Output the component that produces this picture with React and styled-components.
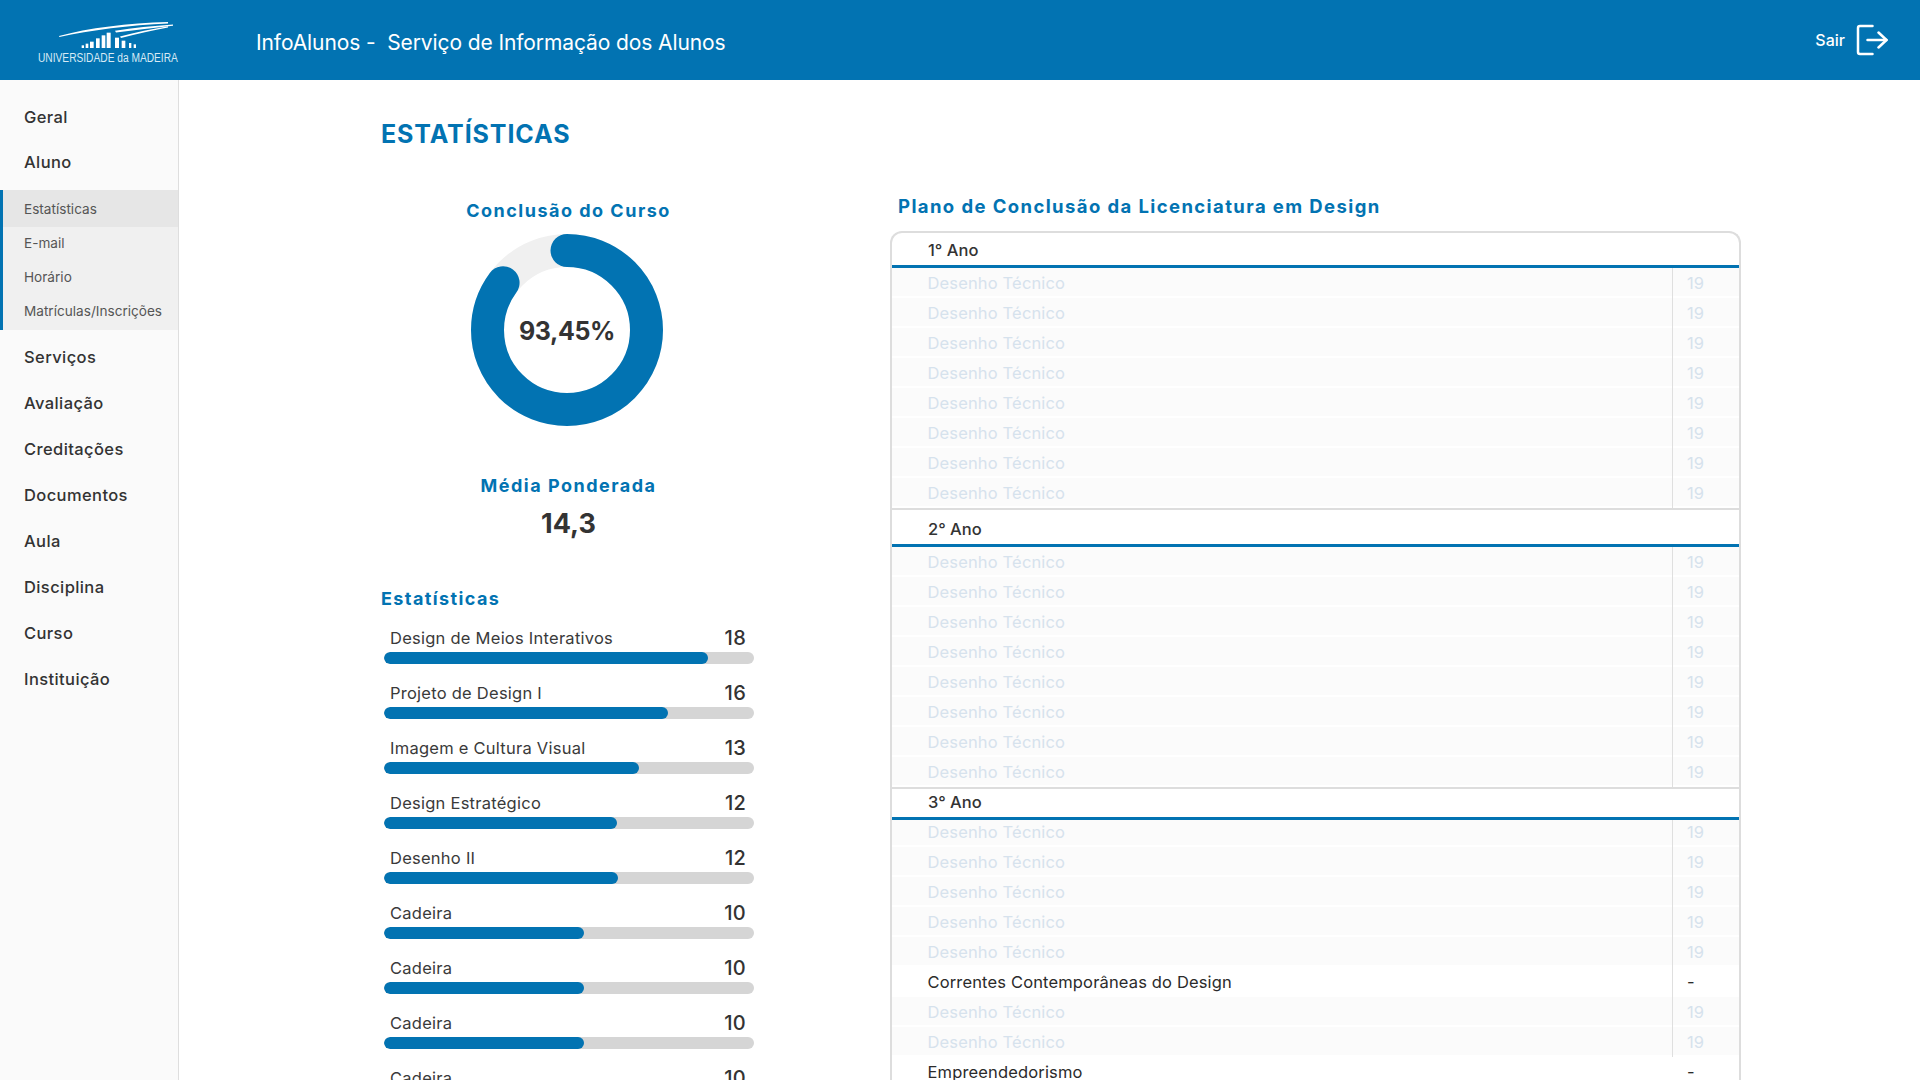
import React from 'react';
import styled, { createGlobalStyle } from 'styled-components';

const BLUE = '#0273b2';

const GlobalStyle = createGlobalStyle`
    html, body {
        margin: 0;
        height: 100%;
        overflow: hidden;
        background: #fff;
    }
    body {
        font-family: Inter, "Noto Sans", sans-serif;
        color: #333;
    }
    * {
        box-sizing: border-box;
    }
`;

const topMenu = ['Geral', 'Aluno'];
const subMenu = ['Estatísticas', 'E-mail', 'Horário', 'Matrículas/Inscrições'];
const bottomMenu = ['Serviços', 'Avaliação', 'Creditações', 'Documentos', 'Aula', 'Disciplina', 'Curso', 'Instituição'];

const grades = [
    { name: 'Design de Meios Interativos', value: 18, pct: 87.5 },
    { name: 'Projeto de Design I', value: 16, pct: 76.8 },
    { name: 'Imagem e Cultura Visual', value: 13, pct: 68.8 },
    { name: 'Design Estratégico', value: 12, pct: 62.9 },
    { name: 'Desenho II', value: 12, pct: 63.2 },
    { name: 'Cadeira', value: 10, pct: 54 },
    { name: 'Cadeira', value: 10, pct: 54 },
    { name: 'Cadeira', value: 10, pct: 54 },
    { name: 'Cadeira', value: 10, pct: 54 },
];

const faded = { name: 'Desenho Técnico', grade: '19', muted: true };

const years = [
    { title: '1° Ano', head: 35, padTop: 2, padBottom: 0, rows: Array(8).fill(faded) },
    { title: '2° Ano', head: 37, padTop: 4, padBottom: 0, rows: Array(8).fill(faded) },
    {
        title: '3° Ano',
        head: 31,
        padTop: 0,
        padBottom: 2,
        short: true,
        rows: [
            ...Array(5).fill(faded),
            { name: 'Correntes Contemporâneas do Design', grade: '-' },
            ...Array(2).fill(faded),
            { name: 'Empreendedorismo', grade: '-', noLine: true },
        ],
    },
];

const logoBars = [
    [245, 7, 136], [257, 8, 131], [270, 11, 125], [288, 11, 115], [305, 11, 106], [320, 12, 98],
    [345, 12, 113], [365, 11, 122], [387, 7, 129], [401, 7, 133],
];

function Logo() {
    return (
        <LogoBox>
            <svg width="140" height="32" viewBox="0 0 140 32">
                <g fill="#fff">
                    <path d="M21 16 C50 8 90 3 130 2 L130 3.4 C92 5 52 10 21.4 17 Z" />
                    <path d="M77 10.8 C95 8 115 6 135 4.6 L135 5.8 C116 8 97 10 78 12.6 Z" />
                    <path d="M82 16.4 C98 12 114 9 130 6.2 L130 7.4 C115 10 99 14 83 18 Z" />
                    {logoBars.map(([x, w, top]) => (
                        <rect key={x} x={x / 3 - 38} y={top / 3 - 20} width={w / 3} height={(144 - top) / 3} />
                    ))}
                </g>
            </svg>
            <LogoText>UNIVERSIDADE da MADEIRA</LogoText>
        </LogoBox>
    );
}

function ExitIcon() {
    return (
        <svg width="32" height="32" viewBox="0 0 32 32" fill="none" stroke="#fff" strokeWidth="2.5" strokeLinecap="round" strokeLinejoin="round">
            <path d="M16.5 2 H4 Q2 2 2 4 V28 Q2 30 4 30 H16.5" />
            <path d="M11.5 16 H30.5" />
            <path d="M22.5 8.5 L30.5 16 L22.5 23.5" />
        </svg>
    );
}

function Donut() {
    const r = 79.5;
    const length = 2 * Math.PI * r;
    return (
        <DonutBox>
            <svg width="192" height="192" viewBox="0 0 192 192">
                <circle cx="96" cy="96" r={r} fill="none" stroke="#f0f0f0" strokeWidth="33" />
                <circle
                    cx="96"
                    cy="96"
                    r={r}
                    fill="none"
                    stroke={BLUE}
                    strokeWidth="33"
                    strokeLinecap="round"
                    strokeDasharray={`${length * 0.85} ${length}`}
                    transform="rotate(-90 96 96)"
                />
            </svg>
            <DonutValue>93,45%</DonutValue>
        </DonutBox>
    );
}

export default function App() {
    return (
        <Page>
            <GlobalStyle />
            <Header>
                <Logo />
                <HeaderTitle>InfoAlunos -&nbsp; Serviço de Informação dos Alunos</HeaderTitle>
                <Logout>
                    <span>Sair</span>
                    <ExitIcon />
                </Logout>
            </Header>
            <Body>
                <Sidebar>
                    {topMenu.map((item) => (
                        <NavItem key={item}>{item}</NavItem>
                    ))}
                    <SubNav>
                        {subMenu.map((item, i) => (
                            <SubItem key={item} $active={i === 0}>{item}</SubItem>
                        ))}
                    </SubNav>
                    <BottomNav>
                        {bottomMenu.map((item) => (
                            <NavItem key={item} $tall>{item}</NavItem>
                        ))}
                    </BottomNav>
                </Sidebar>
                <Main>
                    <PageTitle>ESTATÍSTICAS</PageTitle>
                    <Columns>
                        <LeftColumn>
                            <CenterTitle $gap="1px">Conclusão do Curso</CenterTitle>
                            <Donut />
                            <CenterTitle $gap="46px">Média Ponderada</CenterTitle>
                            <Average>14,3</Average>
                            <StatsTitle>Estatísticas</StatsTitle>
                            <BarList>
                                {grades.map((g, i) => (
                                    <BarRow key={i}>
                                        <BarLabel>
                                            <span>{g.name}</span>
                                            <BarValue>{g.value}</BarValue>
                                        </BarLabel>
                                        <BarTrack>
                                            <BarFill style={{ width: `${g.pct}%` }} />
                                        </BarTrack>
                                    </BarRow>
                                ))}
                            </BarList>
                        </LeftColumn>
                        <RightColumn>
                            <PlanTitle>Plano de Conclusão da Licenciatura em Design</PlanTitle>
                            <PlanTable>
                                {years.map((year, y) => (
                                    <YearBlock key={year.title} $first={y === 0}>
                                        <YearHead $height={year.head} $top={year.padTop} $bottom={year.padBottom}>{year.title}</YearHead>
                                        {year.rows.map((row, i) => (
                                            <PlanRow key={i} $muted={row.muted} $short={year.short && i === 0}>
                                                <PlanName $short={year.short && i === 0}>{row.name}</PlanName>
                                                <PlanGrade $noLine={row.noLine} $short={year.short && i === 0}>{row.grade}</PlanGrade>
                                            </PlanRow>
                                        ))}
                                    </YearBlock>
                                ))}
                            </PlanTable>
                        </RightColumn>
                    </Columns>
                </Main>
            </Body>
        </Page>
    );
}

const Page = styled.div`
    height: 100vh;
    overflow: hidden;
    display: flex;
    flex-direction: column;
`;

const Header = styled.header`
    height: 80px;
    flex-shrink: 0;
    background-color: ${BLUE};
    display: flex;
    align-items: center;
    padding: 0 32px 0 38px;
    color: #fff;
`;

const LogoBox = styled.div`
    width: 218px;
    height: 52px;
    margin-top: 12px;
    display: flex;
    flex-direction: column;
    flex-shrink: 0;
`;

const LogoText = styled.div`
    font-family: "Liberation Sans", sans-serif;
    font-size: 12.5px;
    line-height: 14px;
    margin-top: -1px;
    color: #d8eaf5;
    white-space: nowrap;
    transform: scaleX(0.815);
    transform-origin: left center;
`;

const HeaderTitle = styled.div`
    font-size: 21px;
    letter-spacing: -0.1px;
    padding-top: 4px;
    white-space: nowrap;
`;

const Logout = styled.div`
    margin-left: auto;
    display: flex;
    align-items: center;
    gap: 11px;
    font-size: 16px;
    font-weight: 500;
`;

const Body = styled.div`
    flex: 1;
    display: flex;
    min-height: 0;
`;

const Sidebar = styled.nav`
    width: 179px;
    flex-shrink: 0;
    background-color: #fafafa;
    border-right: 1px solid #dedede;
    padding-top: 14px;
`;

const NavItem = styled.div`
    height: ${(p) => (p.$tall ? '46px' : '45px')};
    display: flex;
    align-items: center;
    padding-left: 24px;
    font-size: 16.5px;
    font-weight: 500;
    letter-spacing: 0.4px;
    color: #333;
`;

const SubNav = styled.div`
    margin-top: 6px;
    height: 140px;
    background-color: #f0f0f0;
    border-left: 3px solid ${BLUE};
`;

const SubItem = styled.div`
    height: ${(p) => (p.$active ? '37px' : '34px')};
    display: flex;
    align-items: center;
    padding: 0 0 ${(p) => (p.$active ? '0' : '2px')} 21px;
    font-size: 13.6px;
    color: #555;
    white-space: nowrap;
    background-color: ${(p) => (p.$active ? '#e6e6e6' : 'transparent')};
`;

const BottomNav = styled.div`
    margin-top: 4px;
`;

const Main = styled.main`
    flex: 1;
    padding: 38px 0 0 202px;
    min-width: 0;
`;

const PageTitle = styled.h1`
    margin: 1px 0 -1px;
    font-size: 25px;
    line-height: 30px;
    font-weight: 700;
    letter-spacing: 0.9px;
    color: ${BLUE};
`;

const Columns = styled.div`
    display: flex;
    margin-top: 48px;
`;

const LeftColumn = styled.section`
    width: 375px;
    flex-shrink: 0;
`;

const CenterTitle = styled.h2`
    margin: ${(p) => p.$gap || '0'} 0 0;
    font-size: 18px;
    line-height: 28px;
    font-weight: 700;
    letter-spacing: 1.5px;
    text-align: center;
    color: ${BLUE};
`;

const DonutBox = styled.div`
    position: relative;
    width: 192px;
    height: 192px;
    margin: 9px 0 0 90px;

    svg {
        display: block;
    }
`;

const DonutValue = styled.div`
    position: absolute;
    inset: 0;
    display: flex;
    align-items: center;
    justify-content: center;
    padding-top: 2px;
    font-size: 25px;
    font-weight: 700;
    letter-spacing: -0.4px;
    color: #333;
`;

const Average = styled.div`
    margin-top: 7px;
    font-size: 27px;
    line-height: 34px;
    font-weight: 700;
    text-align: center;
    color: #333;
`;

const StatsTitle = styled.h3`
    margin: 46px 0 0;
    font-size: 18px;
    line-height: 24px;
    font-weight: 700;
    letter-spacing: 1.4px;
    color: ${BLUE};
`;

const BarList = styled.div`
    margin-top: 15px;
    padding: 0 2px 0 3px;
    display: flex;
    flex-direction: column;
    gap: 17px;
`;

const BarRow = styled.div`
    display: flex;
    flex-direction: column;
    gap: 2px;
`;

const BarLabel = styled.div`
    display: flex;
    justify-content: space-between;
    align-items: center;
    height: 24px;
    padding: 0 8px 0 6px;
    font-size: 16.5px;
    letter-spacing: 0.25px;
    color: #3a3a3a;
`;

const BarValue = styled.span`
    font-size: 20px;
    font-weight: 500;
    color: #333;
`;

const BarTrack = styled.div`
    height: 12px;
    border-radius: 6px;
    background-color: #d5d5d5;
    overflow: hidden;
`;

const BarFill = styled.div`
    height: 100%;
    border-radius: 6px;
    background-color: ${BLUE};
`;

const RightColumn = styled.section`
    margin-left: 134px;
    width: 851px;
    flex-shrink: 0;
`;

const PlanTitle = styled.h2`
    margin: 0 0 15px 8px;
    font-size: 18.5px;
    line-height: 20px;
    font-weight: 700;
    letter-spacing: 1.4px;
    color: ${BLUE};
    white-space: nowrap;
`;

const PlanTable = styled.div`
    border: 2px solid #dddddd;
    border-bottom: 0;
    border-radius: 12px 12px 0 0;
`;

const YearBlock = styled.div`
    border-top: ${(p) => (p.$first ? '0' : '2px solid #dddddd')};
`;

const YearHead = styled.div`
    height: ${(p) => p.$height}px;
    display: flex;
    align-items: center;
    padding: ${(p) => p.$top}px 0 ${(p) => p.$bottom}px 36px;
    border-bottom: 3px solid ${BLUE};
    font-size: 16.5px;
    font-weight: 500;
    color: #333;
`;

const PlanRow = styled.div`
    height: ${(p) => (p.$short ? '27px' : '30px')};
    display: flex;
    background-clip: padding-box;
    background-color: ${(p) => (p.$muted ? '#fbfbfb' : '#fff')};
    border-bottom: 2px solid #fff;
    color: ${(p) => (p.$muted ? '#d6e2ed' : '#2b2b2b')};
    font-size: 16.5px;
    letter-spacing: 0.15px;
`;

const PlanName = styled.div`
    flex: 1;
    display: flex;
    align-items: center;
    padding: ${(p) => (p.$short ? '0 0 1px' : '2px 0 0')} 35.5px;
    padding-right: 0;
    white-space: nowrap;
`;

const PlanGrade = styled.div`
    width: 67px;
    margin-bottom: -2px;
    display: flex;
    align-items: center;
    padding: ${(p) => (p.$short ? '0 0 3px' : '2px 0 2px')} 14px;
    padding-right: 0;
    border-left: 1px solid ${(p) => (p.$noLine ? 'transparent' : '#dfdfdf')};
`;
